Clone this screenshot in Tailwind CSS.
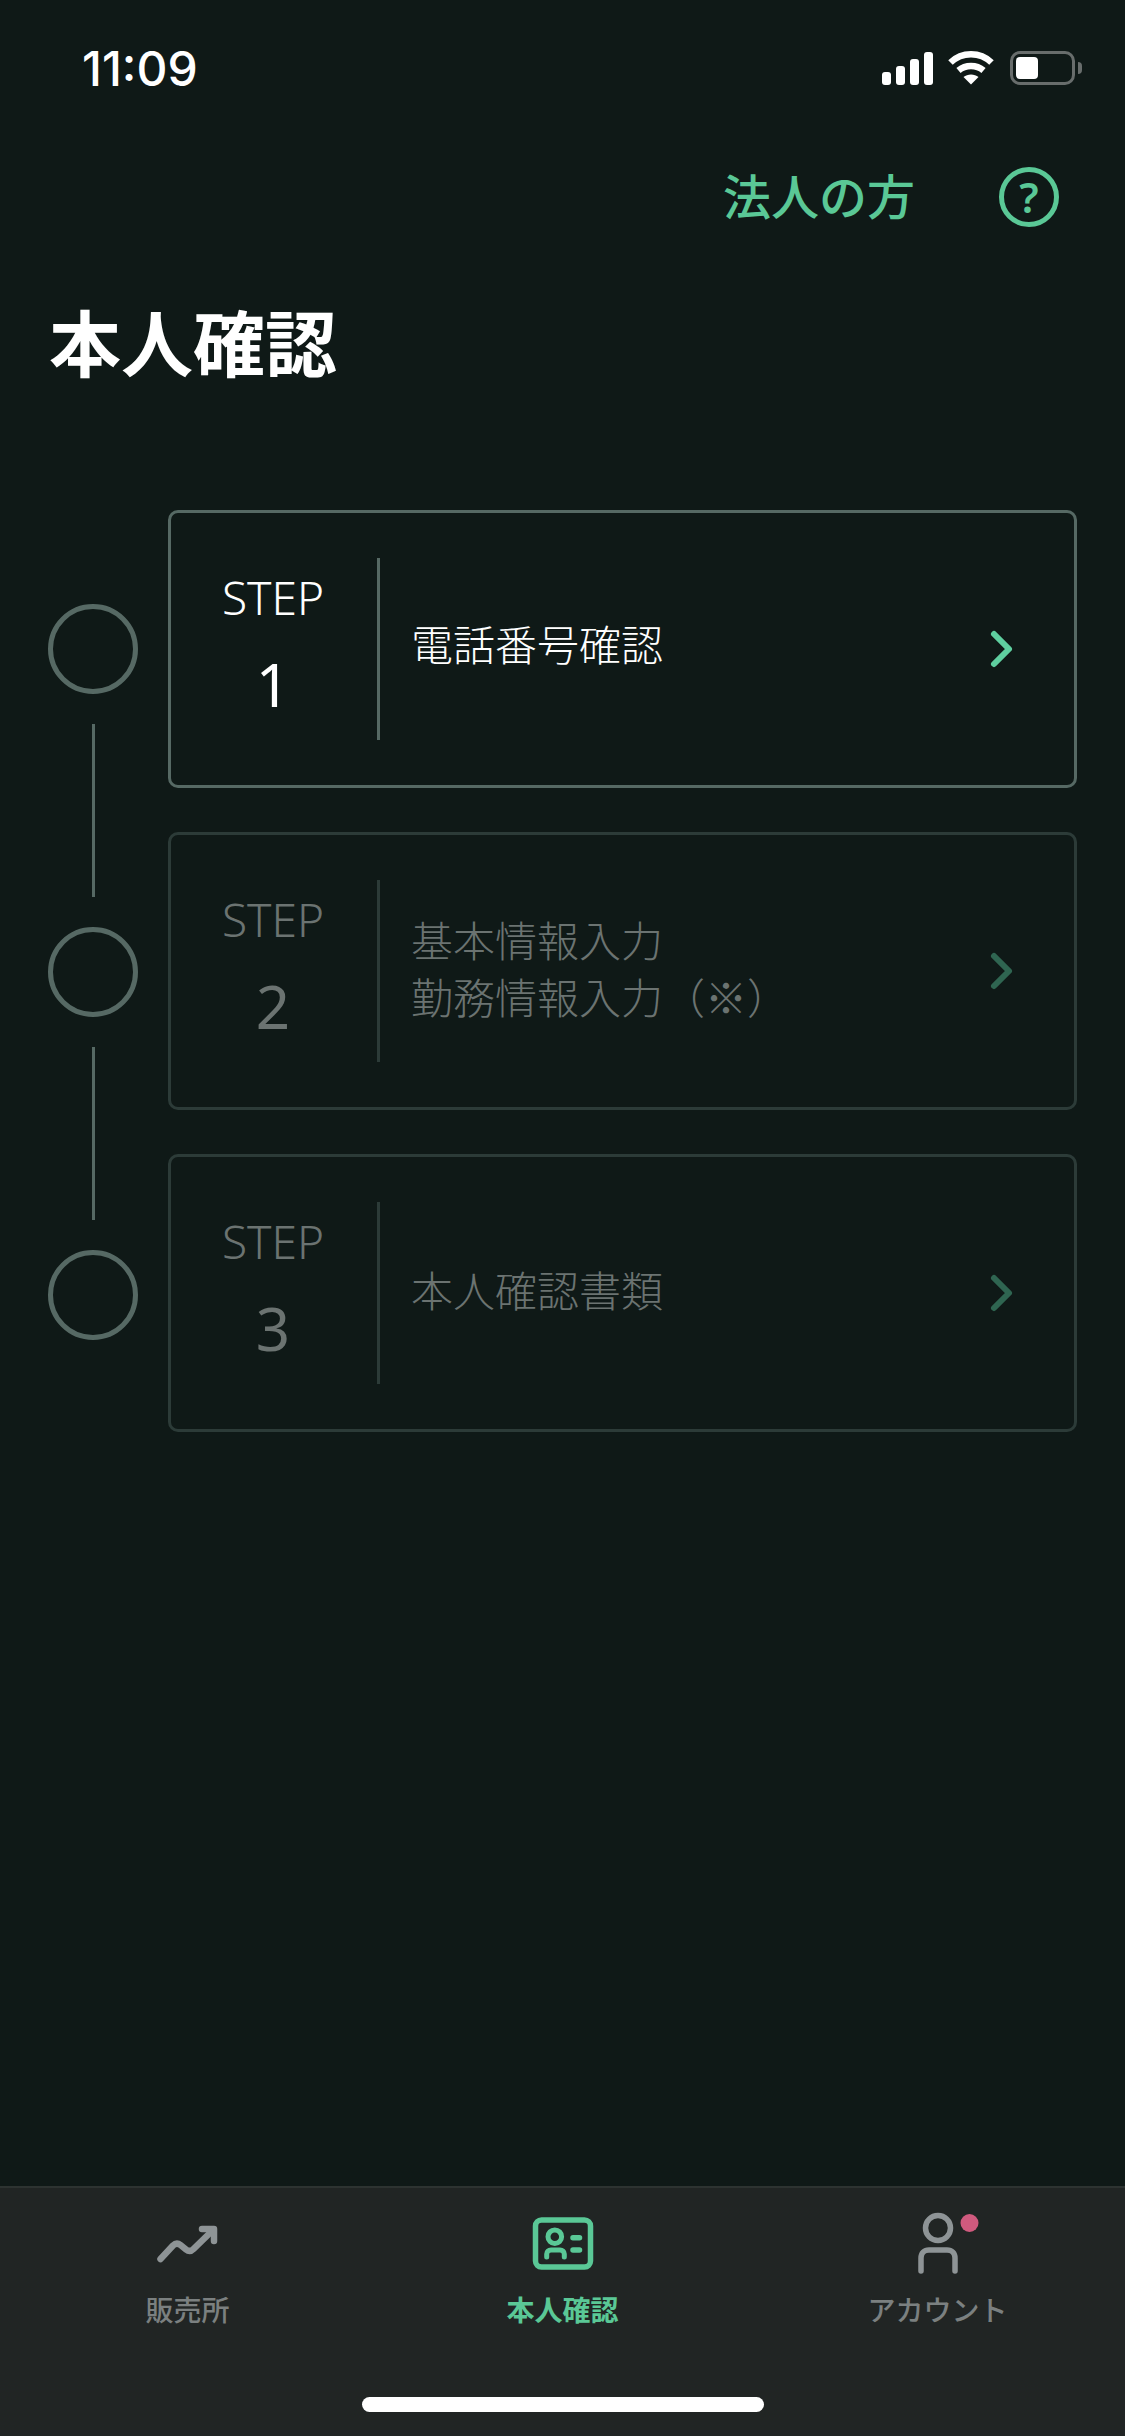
<!DOCTYPE html>
<html lang="ja">

<head>
    <meta charset="UTF-8">
    <meta name="viewport" content="width=device-width, initial-scale=1.0">
    <title>本人確認</title>
    <script src="https://cdn.jsdelivr.net/npm/@tailwindcss/browser@4"></script>
</head>

<body class="w-[1125px] h-[2436px] bg-[#0f1917] flex flex-col overflow-hidden font-['Noto_Sans','Noto_Sans_CJK_JP',sans-serif]">

    <!-- Status bar -->
    <div class="h-[136px] shrink-0 flex items-center justify-between pl-[82px] pr-[43px]">
        <span class="mt-[2px] text-[48px] leading-none font-['Inter',sans-serif] font-medium text-white">11:09</span>
        <div class="flex items-center">
            <svg width="52" height="33" viewBox="0 0 52 33" fill="#fff">
                <rect x="0" y="20" width="9" height="13" rx="3" />
                <rect x="14" y="14" width="9" height="19" rx="3" />
                <rect x="28" y="7" width="9" height="26" rx="3" />
                <rect x="42" y="0" width="9" height="33" rx="3" />
            </svg>
            <svg class="ml-[14px]" width="46" height="34" viewBox="0 0 46 34" fill="none" stroke="#fff">
                <path d="M2.5 11.5C14 0.5 32 0.5 43.5 11.5" stroke-width="6.5" />
                <path d="M10.5 19.5C17.5 13.5 28.5 13.5 35.5 19.5" stroke-width="6.5" />
                <path d="M23 33.5L15.5 26C19.5 22.5 26.5 22.5 30.5 26Z" fill="#fff" stroke="none" />
            </svg>
            <div class="ml-[16px] flex items-center gap-[3px]">
                <div class="w-[65px] h-[34px] rounded-[10px] border-[3px] border-[#686d6c] p-[3px]">
                    <div class="w-[22px] h-full rounded-[4px] bg-white"></div>
                </div>
                <div class="w-[4px] h-[12px] rounded-r-full bg-[#686d6c]"></div>
            </div>
        </div>
    </div>

    <!-- Header -->
    <div class="h-[122px] shrink-0 flex items-center justify-end pr-[66px] gap-[84px]">
        <span class="text-[48px] leading-none font-medium text-[#5ac896]">法人の方</span>
        <div class="w-[60px] h-[60px] rounded-full border-[5px] border-[#5ac896] flex items-center justify-center text-[42px] leading-none font-semibold text-[#5ac896]">?</div>
    </div>

    <h1 class="mt-[40px] ml-[49px] text-[72px] leading-[90px] font-bold text-white">本人確認</h1>

    <!-- Steps -->
    <div class="mt-[122px] pl-[48px] pr-[48px] flex gap-[30px] flex-1">
        <div class="w-[90px] flex flex-col items-center pt-[94px]">
            <div class="w-[90px] h-[90px] rounded-full border-[5px] border-[#566964]"></div>
            <div class="w-[3px] h-[173px] my-[30px] bg-[#566964]"></div>
            <div class="w-[90px] h-[90px] rounded-full border-[5px] border-[#566964]"></div>
            <div class="w-[3px] h-[173px] my-[30px] bg-[#566964]"></div>
            <div class="w-[90px] h-[90px] rounded-full border-[5px] border-[#566964]"></div>
        </div>

        <div class="flex-1 flex flex-col gap-[44px]">
            <div class="h-[278px] rounded-[10px] border-[3px] border-[#566964] flex items-center text-white">
                <div class="w-[206px] shrink-0 flex flex-col items-center pr-[2px] pb-[17px]">
                    <span class="text-[46px] leading-[60px] font-light">STEP</span>
                    <span class="mt-[27px] text-[60px] leading-[60px]">1</span>
                </div>
                <div class="w-[3px] h-[182px] bg-[#566964]"></div>
                <div class="flex-1 pl-[31px] -mt-[10px] text-[42px] leading-[57px] font-light">電話番号確認</div>
                <svg class="mr-[59px]" width="26" height="40" viewBox="0 0 26 40" fill="none" stroke="#5fcfa0" stroke-width="6" stroke-linecap="round" stroke-linejoin="round">
                    <path d="M5 5L20 20L5 35" />
                </svg>
            </div>

            <div class="h-[278px] rounded-[10px] border-[3px] border-[#2c3b38] flex items-center text-[#6b7371]">
                <div class="w-[206px] shrink-0 flex flex-col items-center pr-[2px] pb-[17px]">
                    <span class="text-[46px] leading-[60px] font-light">STEP</span>
                    <span class="mt-[27px] text-[60px] leading-[60px]">2</span>
                </div>
                <div class="w-[3px] h-[182px] bg-[#2c3b38]"></div>
                <div class="flex-1 pl-[31px] -mt-[8px] text-[42px] leading-[57px] font-light font-['Noto_Sans_CJK_JP',sans-serif] [text-spacing-trim:space-all]">基本情報入力<br>勤務情報入力（※）</div>
                <svg class="mr-[59px]" width="26" height="40" viewBox="0 0 26 40" fill="none" stroke="#2f6551" stroke-width="6" stroke-linecap="round" stroke-linejoin="round">
                    <path d="M5 5L20 20L5 35" />
                </svg>
            </div>

            <div class="h-[278px] rounded-[10px] border-[3px] border-[#2c3b38] flex items-center text-[#6b7371]">
                <div class="w-[206px] shrink-0 flex flex-col items-center pr-[2px] pb-[17px]">
                    <span class="text-[46px] leading-[60px] font-light">STEP</span>
                    <span class="mt-[27px] text-[60px] leading-[60px]">3</span>
                </div>
                <div class="w-[3px] h-[182px] bg-[#2c3b38]"></div>
                <div class="flex-1 pl-[31px] -mt-[6px] text-[42px] leading-[57px] font-light">本人確認書類</div>
                <svg class="mr-[59px]" width="26" height="40" viewBox="0 0 26 40" fill="none" stroke="#2f6551" stroke-width="6" stroke-linecap="round" stroke-linejoin="round">
                    <path d="M5 5L20 20L5 35" />
                </svg>
            </div>
        </div>
    </div>

    <!-- Tab bar -->
    <div class="h-[250px] shrink-0 bg-[#212524] border-t-2 border-[#2d3331] relative">
        <div class="grid grid-cols-3 pt-[24px]">
            <div class="flex flex-col items-center">
                <svg width="64" height="64" viewBox="0 0 64 64" fill="none" stroke="#8e9496" stroke-width="6.500" stroke-linecap="round" stroke-linejoin="round">
                    <path d="M4.500 47L17 33.500C19.500 31 22 31 24.500 33L30 37.500C32.500 39.500 35 39.500 37.500 37L57 18" />
                    <path d="M46 17H58V29" />
                </svg>
                <span class="mt-[16px] text-[28px] leading-[36px] font-medium text-[#7b8080]">販売所</span>
            </div>
            <div class="flex flex-col items-center">
                <svg width="64" height="64" viewBox="0 0 64 64" fill="none" stroke="#5ac896" stroke-width="5.500" stroke-linecap="round">
                    <rect x="4.500" y="8" width="55" height="47" rx="6" />
                    <circle cx="23.800" cy="24.700" r="6.800" stroke-width="5" />
                    <path d="M15.700 45V42C15.700 39.500 17.500 38 20 38H29C31.500 38 33.300 39.500 33.300 42V45" stroke-width="5" />
                    <path d="M42 25.700H48.500M42 38H48.500" />
                </svg>
                <span class="mt-[16px] text-[28px] leading-[36px] font-bold text-[#5ac896]">本人確認</span>
            </div>
            <div class="flex flex-col items-center">
                <svg class="overflow-visible" width="64" height="64" viewBox="0 0 64 64" fill="none" stroke="#8e9496" stroke-width="5.500" stroke-linecap="round">
                    <circle cx="32" cy="16" r="12.500" />
                    <path d="M15 59V46C15 41 18 38 23 38H41C46 38 49 41 49 46V59" />
                    <circle cx="63.500" cy="11" r="9" fill="#d05a7e" stroke="none" />
                </svg>
                <span class="mt-[16px] text-[28px] leading-[36px] font-medium text-[#7b8080]">アカウント</span>
            </div>
        </div>
        <div class="absolute left-[362px] bottom-[24px] w-[402px] h-[15px] rounded-full bg-white"></div>
    </div>

</body>

</html>
